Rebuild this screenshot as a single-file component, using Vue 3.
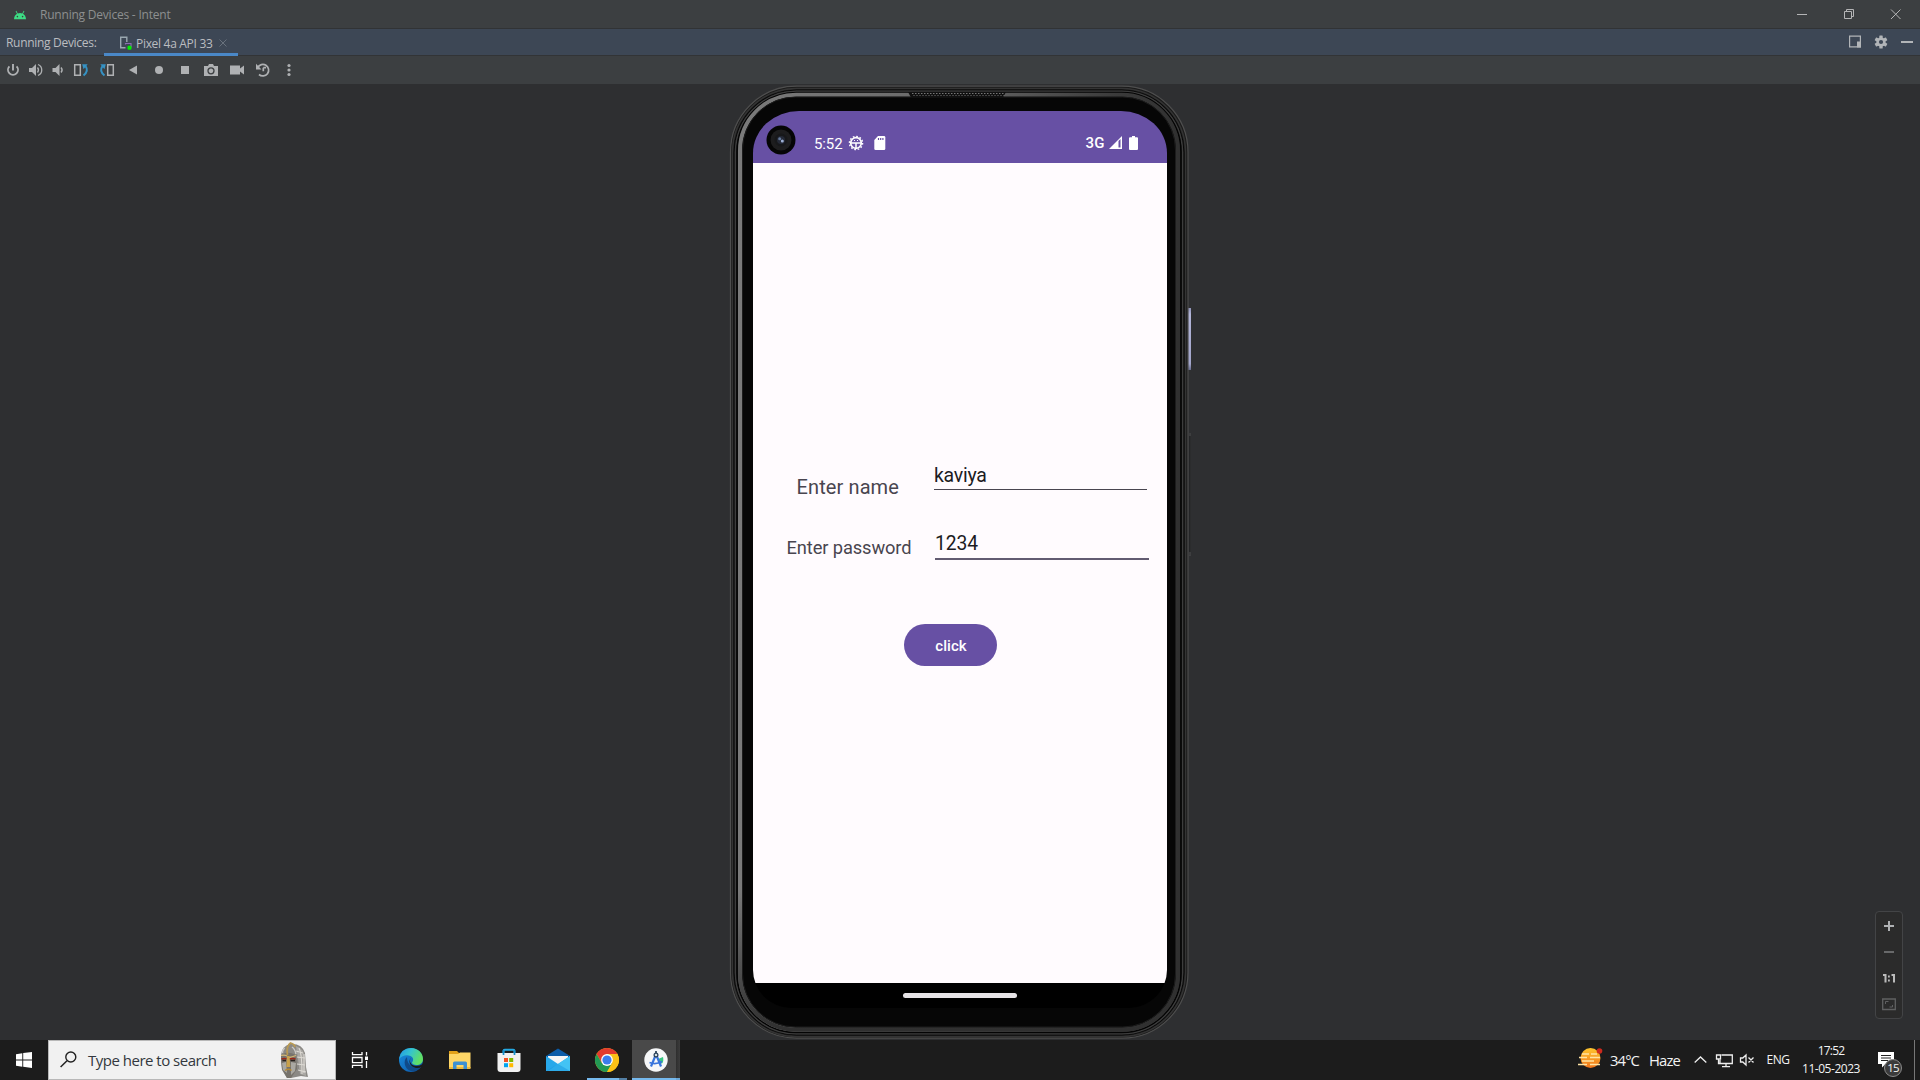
<script setup>
// Sets letter-spacing so that a label occupies a known width.
const vFit = {
  mounted(el, { value }) {
    const n = el.textContent.length
    const natural = el.getBoundingClientRect().width
    el.style.letterSpacing = `${(value - natural) / n}px`
  }
}
const speakerDots = Array.from({ length: 31 }, (_, i) => 182 + i * 3)
</script>

<template>
  <div class="desktop">
    <header class="titlebar">
      <svg class="droid" width="14" height="10" viewBox="0 0 14 10">
        <path d="M1 9.2C1.2 6.6 2.3 4.8 4 3.8L2.6 1.2l.7-.4 1.5 2.6a6.5 6.5 0 0 1 4.4 0L10.700 .8l.7.4L10 3.800c1.700 1 2.800 2.800 3 5.400z" fill="#3ddc84" />
        <circle cx="4.400" cy="6.600" r=".8" fill="#3c3f41" /><circle cx="9.600" cy="6.600" r=".8" fill="#3c3f41" />
      </svg>
      <span v-fit="130.5" class="title">Running Devices - Intent</span>
      <svg class="winbtns" width="123" height="28" viewBox="0 0 123 28" fill="none" stroke="#b4b5b6">
        <path d="M0 14.5h10M47.500 11.500h7v7h-7zM49.500 11.500v-2h7v7h-2M94 9.500l9.500 9.500m0-9.500L94 19" />
      </svg>
    </header>

    <div class="tabs">
      <span v-fit="90.5" class="tabs-label">Running Devices:</span>
      <div class="tab">
        <svg width="13" height="16" viewBox="0 0 13 16">
          <path d="M6.500 12.700H1.700V2.300h6.100V7" fill="none" stroke="#9aa7b0" stroke-width="1.400" />
          <path d="M6.500 9.500v-1H12v4" fill="none" stroke="#8b6cb0" stroke-width="1.200" />
          <rect x="8.500" y="10.800" width="4" height="4" rx="1.200" fill="#00f000" />
        </svg>
        <span v-fit="76.500" class="tab-name">Pixel 4a API 33</span>
        <svg class="close" width="8" height="8" viewBox="0 0 8 8"><path d="M.5.5l7 7m0-7l-7 7" stroke="#68717c" fill="none" /></svg>
      </div>
      <svg class="tabtools" width="66" height="14" viewBox="0 0 66 14">
        <path d="M.6 1.100h10.800v10.800H.6z" fill="none" stroke="#b2b5b8" stroke-width="1.200" /><path d="M8 6.500h4v6H8z" fill="#b2b5b8" />
        <g transform="translate(32 7)" fill="#b2b5b8">
          <circle r="4.600" />
          <rect v-for="a in [0, 60, 120]" :key="a" x="-1.700" y="-6.500" width="3.400" height="13" rx=".6" :transform="`rotate(${a})`" />
          <circle r="2.100" fill="#3d4755" />
        </g>
        <path d="M52 6h12v2H52z" fill="#b2b5b8" />
      </svg>
    </div>

    <nav class="tools">
      <svg style="width: 22px" viewBox="-11 -13 22 26"><path d="M0-6v6.500M-3.600-3.700a5 5 0 1 0 7.200 0" fill="none" stroke="#afb1b3" stroke-width="1.900" /></svg>
      <svg style="width: 23px" viewBox="-11.500 -13 23 26"><path d="M-6.500-2h3l4-4V6l-4-4h-3z" fill="#afb1b3" /><path d="M2-2.500q2 2.500 0 5M2.500-5.500c5 2 5 9 0 11" fill="none" stroke="#afb1b3" stroke-width="1.300" /></svg>
      <svg style="width: 21px" viewBox="-10.500 -13 21 26"><path d="M-5-2h3l4-4V6l-4-4h-3z" fill="#afb1b3" /><path d="M3.500-2.500q2.200 2.500 0 5" fill="none" stroke="#afb1b3" stroke-width="1.400" /></svg>
      <svg viewBox="-13 -13 26 26"><path d="M-6.300-5.200h5.600V5.200h-5.600z" fill="none" stroke="#afb1b3" stroke-width="1.500" /><path d="M2.500 5.500Q8 1 4.500-4" fill="none" stroke="#3592c4" stroke-width="2" /><path d="M1.200-5.700h5.500L2.500-.8z" fill="#3592c4" /></svg>
      <svg viewBox="-13 -13 26 26"><path d="M.7-5.200h5.600V5.200H.7z" fill="none" stroke="#afb1b3" stroke-width="1.500" /><path d="M-2.500 5.500Q-8 1-4.500-4" fill="none" stroke="#3592c4" stroke-width="2" /><path d="M-1.200-5.700h-5.500l4.200 4.900z" fill="#3592c4" /></svg>
      <svg viewBox="-13 -13 26 26"><path d="M-4 0l8-4.500v9z" fill="#afb1b3" /></svg>
      <svg viewBox="-13 -13 26 26"><circle r="4" fill="#afb1b3" /></svg>
      <svg viewBox="-13 -13 26 26"><path d="M-4-4h8v8h-8z" fill="#afb1b3" /></svg>
      <svg viewBox="-13 -13 26 26"><path d="M-7-4h4l1-2h4l1 2h4V6H-7z" fill="#afb1b3" /><circle cy=".8" r="3" fill="none" stroke="#3c3f41" stroke-width="1.300" /></svg>
      <svg viewBox="-13 -13 26 26"><path d="M-7-4.500h10v3l4-3v9l-4-3v3H-7z" fill="#afb1b3" /></svg>
      <svg viewBox="-13 -13 26 26"><path d="M-5.300-2.500A5.800 5.800 0 1 1-4 4.500M.3-2.300H3M.3-2.300v3.600" fill="none" stroke="#afb1b3" stroke-width="1.700" /><path d="M-7-6.200v5.700h5.500z" fill="#afb1b3" /></svg>
      <svg viewBox="-13 -13 26 26" fill="#afb1b3"><circle cy="-4.500" r="1.600" /><circle r="1.600" /><circle cy="4.500" r="1.600" /></svg>
    </nav>

    <main class="canvas">
      <div class="phone">
        <svg class="frame" width="464" height="954" viewBox="0 0 464 954" fill="none">
          <defs>
            <linearGradient id="rim" x1="0" y1="0" x2="1" y2="0">
              <stop offset="0" stop-color="#7a7a7a" /><stop offset=".5" stop-color="#686868" /><stop offset=".85" stop-color="#3c3c3c" /><stop offset="1" stop-color="#303030" />
            </linearGradient>
            <linearGradient id="shade" x1="0" y1="0" x2="0" y2="1">
              <stop offset=".85" stop-color="#303030" stop-opacity="0" /><stop offset="1" stop-color="#303030" />
            </linearGradient>
            <linearGradient id="power" x1="0" y1="0" x2="0" y2="1">
              <stop offset="0" stop-color="#8f93b8" /><stop offset=".1" stop-color="#b2b5d8" /><stop offset=".9" stop-color="#a2a5cb" /><stop offset="1" stop-color="#666a8c" />
            </linearGradient>
          </defs>
          <rect x="458" y="222" width="3" height="62" fill="url(#power)" />
          <path d="M459.500 347v122" stroke="#242527" stroke-width="1.500" /><path d="M460 347v3m0 116v4" stroke="#505153" />
          <rect x=".5" y=".2" width="457.500" height="952" rx="66" fill="#1b1b1b" stroke="#4e4e4e" stroke-width="1.200" />
          <rect x="2.500" y="2.500" width="453" height="948" rx="64" stroke="#343434" stroke-width="1.500" />
          <rect x="4" y="4" width="450" height="945" rx="62.500" stroke="#080808" />
          <rect x="5.500" y="5.300" width="447" height="942.500" rx="61" stroke="#3d3d3d" stroke-width="1.500" />
          <rect x="7" y="6.500" width="444" height="940" rx="59.500" stroke="#040404" stroke-width="1.500" />
          <rect x="10" y="8.700" width="438" height="935" rx="56" stroke="url(#rim)" stroke-width="4" />
          <rect x="10" y="8.700" width="438" height="935" rx="56" stroke="url(#shade)" stroke-width="4" />
          <rect x="12.500" y="11" width="433" height="930" rx="53" fill="#060606" stroke="#1c1c1c" />
          <path d="M178 6h98l-3 5.500h-92z" fill="#111" />
          <g stroke="#777" stroke-width="1"><path v-for="x in speakerDots" :key="x" :d="`M${x} 7.500h1.500m0 2h1`" /></g>
        </svg>

        <section class="screen">
          <div class="status">
            <span v-fit="28.5" class="time">5:52</span>
            <svg class="bug" width="16" height="16" viewBox="-8 -8 16 16">
              <circle r="5.300" fill="none" stroke="#fff" stroke-width="1.700" />
              <circle r="6.600" fill="none" stroke="#fff" stroke-width="1.400" stroke-dasharray="1.700 1.756" />
              <path d="M-5-.1H5M0 0v5" stroke="#fff" stroke-width="1.500" /><path d="M-2-2.500h1m2 0h1" stroke="#fff" />
            </svg>
            <svg class="sd" width="12" height="14" viewBox="0 0 12 14"><path d="M4 0h6q1.300 0 1.300 1.300v11.400q0 1.300-1.300 1.300H1.600Q.3 14 .3 12.700V4z" fill="#fff" /><path d="M4.500 2v2M6.700 2v2M8.900 2v2" stroke="#6750a4" stroke-width="1.200" /></svg>
            <span v-fit="19" class="net">3G</span>
            <svg class="signal" width="13" height="13" viewBox="0 0 13 13"><path d="M13 0v13H0z" fill="#fff" /><path d="M9.500 5l2-2v8.500h-2z" fill="#6750a4" /></svg>
            <svg class="battery" width="9" height="14" viewBox="0 0 9 14"><path d="M3 0h3v1.300h2q1 0 1 1V13q0 1-1 1H1q-1 0-1-1V2.300q0-1 1-1h2z" fill="#fff" /></svg>
            <svg class="camera" width="30" height="30" viewBox="-15 -15 30 30">
              <circle r="14.500" fill="#050505" /><circle r="10.500" fill="#1d1d1e" /><circle r="6.500" fill="#17181a" /><circle r="4" fill="#242936" />
              <circle cx="-1.300" cy="-1.300" r="1.500" fill="#65799b" /><circle cx="1.300" cy="1" r="1.500" fill="#9eb1d5" />
            </svg>
          </div>
          <div class="form">
            <div class="row name-row">
              <label><span v-fit="102.5">Enter name</span></label>
              <div class="field"><span v-fit="52.5">kaviya</span></div>
            </div>
            <div class="row pass-row">
              <label><span v-fit="125">Enter password</span></label>
              <div class="field"><span v-fit="43">1234</span></div>
            </div>
            <button><span v-fit="31.5">click</span></button>
          </div>
          <div class="navbar"><i></i></div>
        </section>
      </div>

      <aside class="zoom">
        <svg width="27" height="107" viewBox="0 0 27 107">
          <path d="M8 14h10m-5-5v10" stroke="#afb1b3" stroke-width="2" /><path d="M8 40h10" stroke="#68696a" stroke-width="2" />
          <path d="M7 63h2.500v7.500M15.500 63H18v7.500" fill="none" stroke="#bbb" stroke-width="2" /><path d="M12 63.500h1.800v2H12zm0 4h1.800v2H12z" fill="#bbb" />
          <path d="M6.700 87h12.600v10.500H6.700z" fill="none" stroke="#606162" stroke-width="1.300" /><path d="M9.500 92v-2.500h3m4 3.500v2h-3" fill="none" stroke="#606162" />
        </svg>
      </aside>
    </main>

    <footer class="taskbar">
      <div class="start"><svg width="16" height="16" viewBox="0 0 16 16" fill="#fff"><path d="M0 2.200l6.300-.9v6.300H0zM7.200 1.100L16 0v7.600H7.200zM0 8.400h6.300v6.300L0 13.800zM7.200 8.400H16V16l-8.800-1.200z" /></svg></div>
      <div class="search">
        <svg class="glass" width="17" height="17" viewBox="0 0 17 17"><circle cx="10.800" cy="6" r="5" fill="none" stroke="#222" stroke-width="1.400" /><path d="M7 9.700L.6 16" stroke="#222" stroke-width="1.500" /></svg>
        <span v-fit="128.5">Type here to search</span>
        <svg class="helmet" width="31" height="37" viewBox="0 0 31 37">
          <path d="M2 13Q3 4 11 2q12-1 15 9l1 14 2 10-7-1-10 2H8l-5-8-1-8z" fill="#8b8985" />
          <path d="M17 4q9 3 9 13l1 17-6-2-2-15z" fill="#aaa8a4" />
          <path d="M20 6q3 5 3 26M17 9l7 2M18 15l8 1M18 22l8 1M19 28l8 2M25 12v19" stroke="#dedbd5" fill="none" />
          <path d="M2 14q5-6 15-1l1 14-6 9H8l-5-9z" fill="#77736c" />
          <path d="M3 21l4-1 1 11-4-3zM12 20l5 1-1 8-4 4z" fill="#aaa8a2" />
          <path d="M2 13.500q5-1 6.500 1t8.500-1" fill="none" stroke="#d8bb78" stroke-width="1.200" />
          <path d="M2.500 17.200q3-1.500 5 0m3 0q3-1.500 6 0" fill="none" stroke="#9c2516" stroke-width="1.500" />
          <path d="M3.500 18.500h3.500m4.500 0h4.500" stroke="#27211d" stroke-width="1.300" />
          <path d="M8 14l2.500.1.800 11h-4z" fill="#c9a14a" /><path d="M6 28.500q3.500-2.500 6.500 0" fill="none" stroke="#b68a35" stroke-width="1.300" />
          <path d="M8.500 13Q7 4 11.500 1q4 1 4.500 4" fill="none" stroke="#b99a52" stroke-width="1.800" /><path d="M5.500 6q-2 2-2 5M13 5q3 2 4 7" fill="none" stroke="#cbc9c4" stroke-width="1.500" />
        </svg>
      </div>
      <div class="apps">
        <svg class="taskview" viewBox="0 0 48 40" fill="none" stroke="#fff" stroke-width="1.300"><path d="M16.500 12v2.700H26V12M16.500 28v-2.700H26V28M16.500 17.500H26v5.200h-9.500zM30.500 12v3.500M30.500 21v7" /><path d="M29 16.500h3v3.500h-3z" fill="#fff" stroke="none" /></svg>
        <svg viewBox="0 0 48 40">
          <defs>
            <linearGradient id="edgeTop" x1="0" y1="0" x2="1" y2=".4"><stop stop-color="#2196e8" /><stop offset=".5" stop-color="#35c4ce" /><stop offset="1" stop-color="#61e063" /></linearGradient>
            <linearGradient id="edgeLow" x1="0" y1="0" x2="1" y2="1"><stop stop-color="#1a93e4" /><stop offset="1" stop-color="#0b4f9e" /></linearGradient>
          </defs>
          <circle cx="24" cy="20" r="12" fill="url(#edgeLow)" />
          <path d="M12 19Q14 8 24 8c7 0 12 5 12 11 0 4-3 6-6.500 6-3 0-4.500-1-4.500-2.500 1.500-1.500 2-5-1.500-6.500-4-2-9 0-11.500 3z" fill="url(#edgeTop)" />
          <path d="M20 17c-4 3-3 12 4 14 5 1 9-2 10.500-5-3 2-7 2-9.500.5-3.500-2-5-5-5-9.500z" fill="#104a88" />
          <path d="M24.500 17.500q-2 1.200-1.500 4 1 4 6 4.500 4 0 7.500-2.500l-1 3q-4.500 2.500-8 1-5-2-5-6 0-3 2-4z" fill="#1c1c1c" />
        </svg>
        <svg viewBox="0 0 48 40"><path d="M13 11h8l2 2h11v4H13z" fill="#e3a21a" /><path d="M13 14h9l2-1.500h10.500V28H13z" fill="#ffd767" /><path d="M13 27h21.500v2H13z" fill="#eebb3d" /><path d="M17 29v-6q0-1.500 1.500-1.500h11q1.500 0 1.500 1.500v6h-3.500v-4h-7v4z" fill="#3d91d3" /></svg>
        <svg viewBox="0 0 48 40"><path d="M18.500 15v-4q0-1.300 1.300-1.300h8.400q1.300 0 1.300 1.300v4" fill="none" stroke="#24a9e2" stroke-width="1.900" /><path d="M12.500 13h23v16q0 3-3 3h-17q-3 0-3-3z" fill="#f1f1f1" /><path d="M18.500 10v5m11-5v5" stroke="#1590cc" stroke-width="1.700" /><path d="M19 18h4v4h-4z" fill="#f25022" /><path d="M24.200 18h4v4h-4z" fill="#7fba00" /><path d="M19 23.200h4v4h-4z" fill="#00a4ef" /><path d="M24.200 23.200h4v4h-4z" fill="#ffb900" /></svg>
        <svg viewBox="0 0 48 40"><path d="M12 16l12-7.500L36 16v3H12z" fill="#0c5ca8" /><path d="M14 16h20v8H14z" fill="#f5f5f5" /><path d="M12 16l12 8 12-8v15H12z" fill="#28a8ea" /><path d="M36 16v15H14l10-7z" fill="#43c3f4" /><path d="M24 24l12 7H12z" fill="#1a96df" opacity=".5" /></svg>
        <div class="app running">
          <svg viewBox="0 0 48 40"><circle cx="24" cy="20" r="12" fill="#fbc116" /><path d="M13.600 14A12 12 0 0 1 34.400 14H24L18.800 23z" fill="#e33b2e" /><path d="M13.600 14A12 12 0 0 0 24 32l5.200-9H18.800z" fill="#229954" /><path d="M34.400 14H24l5.200 9L24 32A12 12 0 0 0 34.400 14z" fill="#fbc116" /><circle cx="24" cy="20" r="5.900" fill="#fff" /><circle cx="24" cy="20" r="4.600" fill="#3b7ded" /></svg>
          <i></i><b></b>
        </div>
        <div class="app active">
          <svg viewBox="0 0 48 40"><circle cx="24" cy="20" r="11.700" fill="#f6f7f8" /><path d="M26 19l5-2q1 4-1 6.500h-3z" fill="#36c681" /><path d="M23.500 15.500l-4.500 11M24.500 15.500l4.500 11" fill="none" stroke="#3874dc" stroke-width="2.200" /><path d="M17.500 22.500q6 2.500 12.500-1" fill="none" stroke="#3874dc" stroke-width="1.800" /><circle cx="24" cy="15" r="1.900" fill="#d4dce3" stroke="#263e55" stroke-width="1.200" /><path d="M24 11v2" stroke="#263e55" stroke-width="1.700" /></svg>
          <i></i><b></b>
        </div>
      </div>
      <div class="tray">
        <svg class="weather" width="26" height="24" viewBox="0 0 26 24">
          <defs><linearGradient id="sun" x1="0" y1="0" x2="0" y2="1"><stop stop-color="#ffc62e" /><stop offset="1" stop-color="#ef731a" /></linearGradient></defs>
          <circle cx="12.500" cy="11" r="10" fill="url(#sun)" /><path d="M4 7h7M13 7h6M1 10.500h8M12 10.500h10M4 14h12M0 17.500h9M12 17.500h10" stroke="#ffe3a2" stroke-width="1.500" /><circle cx="21.500" cy="4" r="2.800" fill="#cd2a1d" />
        </svg>
        <span v-fit="29" class="temp">34°C</span>
        <span v-fit="31" class="haze">Haze</span>
        <svg class="sysicons" width="64" height="16" viewBox="0 0 64 16" fill="none" stroke="#eee" stroke-width="1.300"><path d="M.7 10.500L6.500 5l5.800 5.500M27.500 3h10.800v8.500H26V8M32 11.500v3m-4 .1h8M22.500 3h4v4h-4zM24.500 7v4.500h2M46.500 6h2.300L52 3v10l-3.200-3h-2.300zM54.500 5.500l5 5m0-5l-5 5" /></svg>
        <span v-fit="23" class="lang">ENG</span>
        <div class="clock"><span v-fit="26.500">17:52</span><span v-fit="58">11-05-2023</span></div>
        <div class="notes">
          <svg width="17" height="16" viewBox="0 0 17 16"><path d="M0 0h16v12H7.500L4 15.500V12H0z" fill="#fff" /><path d="M3 3.500h10M3 6h10M3 8.500h7" stroke="#222" /></svg>
          <em><span v-fit="11.500">15</span></em>
        </div>
      </div>
    </footer>
  </div>
</template>

<style>
body { margin: 0; overflow: hidden; background: #2e2f31; }
</style>

<style scoped>
* { box-sizing: border-box; }
svg { display: block; flex: none; }
span { white-space: nowrap; flex: none; }
.desktop { width: 1920px; height: 1080px; display: flex; flex-direction: column; font-family: "Open Sans", "Noto Sans", sans-serif; font-size: 12px; }
.titlebar { height: 29px; display: flex; align-items: center; background: #3c3f41; border-bottom: 1px solid #313335; padding-left: 13px; }
.droid { margin-top: 1px; }
.title { margin-left: 13px; margin-top: 2px; color: #8d8f90; line-height: 26px; }
.winbtns { margin-left: auto; }
.tabs { height: 27px; display: flex; align-items: center; background: #3d4755; border-bottom: 1px solid #323436; color: #bbbdc0; }
.tabs-label { margin-left: 6px; margin-top: 2px; line-height: 24px; }
.tab { width: 134px; height: 27px; margin: 0 0 -1px 7.5px; padding: 3px 0 0 15px; display: flex; align-items: center; border-bottom: 3px solid #4a88c7; }
.tab-name { margin-left: 4px; margin-top: 2px; line-height: 20px; }
.close { margin-left: 6.5px; }
.tabtools { margin-left: auto; margin-right: 5px; width: 66px; }
.tools { height: 28px; display: flex; align-items: center; background: #3c3f41; padding-left: 2px; }
.tools svg { width: 26px; height: 26px; }
.canvas { height: 956px; background: #2e2f31; position: relative; display: flex; justify-content: center; padding-top: 2px; }
.phone { position: relative; width: 460px; height: 954px; padding: 25px 0 0 23px; }
.frame { position: absolute; left: 0; top: 0; overflow: visible; }
.screen { position: relative; width: 414px; height: 897px; border-radius: 46px 46px 38px 38px / 42px 42px 38px 38px; overflow: hidden; background: #000; font-family: Roboto, sans-serif; display: flex; flex-direction: column; }
.status { height: 52px; background: #6750a4; color: #fff; display: flex; align-items: center; padding: 11px 29px 0 61px; font-size: 15px; position: relative; }
.time { line-height: 20px; margin-top: 2px; }
.bug { margin-left: 5.5px; }
.sd { margin-left: 9.5px; }
.net { margin-left: auto; font-weight: 500; }
.signal { margin-left: 4.5px; }
.battery { margin-left: 7px; }
.camera { position: absolute; left: 12.500px; top: 13.500px; }
.form { height: 820px; background: #fffbfe; padding-top: 300px; color: #49454f; }
.row { display: flex; align-items: flex-start; }
.row label, .field { display: flex; line-height: 24px; }
.field { color: #1c1b1f; padding-top: 1px; }
.name-row { height: 27px; padding-left: 43.5px; font-size: 20px; }
.name-row label { width: 137.5px; padding-top: 12px; }
.name-row .field { width: 213px; height: 27px; border-bottom: 1px solid #49454f; font-size: 19.500px; }
.pass-row { height: 29px; margin-top: 41px; padding-left: 33.500px; font-size: 18.300px; }
.pass-row label { width: 148.500px; padding-top: 5px; }
.pass-row .field { width: 214px; height: 29px; border-bottom: 2px solid #625b71; font-size: 19.300px; }
button { display: flex; align-items: center; justify-content: center; margin: 64px 0 0 151px; width: 93px; height: 42px; border: 0; border-radius: 21px; padding: 2px 0 0 1px; background: #6750a4; color: #fff; font: 500 15px Roboto, sans-serif; }
.navbar { height: 25px; display: flex; justify-content: center; padding-top: 10px; }
.navbar i { width: 114px; height: 5px; border-radius: 2.500px; background: #e6e3e6; }
.zoom { position: absolute; left: 1875px; top: 827px; width: 28px; height: 108px; border: 1px solid #434446; border-radius: 4px; background: #2b2b2b; }
.taskbar { height: 40px; background: #1c1c1c; color: #f3f3f3; display: flex; }
.start { width: 48px; display: flex; align-items: center; justify-content: center; }
.search { width: 288px; height: 40px; background: #f1f1f1; border: 1px solid #b8b8b8; display: flex; align-items: center; padding-left: 11px; font-size: 15px; color: #33383e; }
.glass { margin-right: 11px; margin-top: -2px; }
.helmet { margin-left: 62px; }
.apps { display: flex; gap: 1px; }
.apps svg { width: 48px; height: 40px; }
.apps .taskview { margin-right: 2px; }
.app { position: relative; width: 48px; height: 40px; }
.app i, .app b { position: absolute; bottom: 0; height: 2px; background: #76b9ed; }
.running i { left: 4px; width: 32px; }
.running b { left: 36px; width: 8px; background: #537fa4; }
.active { background: linear-gradient(90deg, #494949 44px, #2e2e2e 44px, #3c3c3c); }
.active i { left: 0; width: 44px; }
.active b { left: 44px; width: 4px; background: #6aa6d5; }
.tray { margin-left: auto; display: flex; align-items: center; width: 342px; }
.weather { margin-top: -3px; }
.temp { margin-left: 6px; font-size: 14.800px; }
.haze { margin-left: 10px; font-size: 14.800px; }
.sysicons { margin-left: 14px; margin-top: -1px; }
.lang { margin-left: 8.5px; margin-top: -1px; }
.clock { margin-left: 12.500px; width: 58px; display: flex; flex-direction: column; align-items: center; line-height: 18px; }
.notes { position: relative; margin-left: 17.500px; width: 37.500px; height: 40px; padding-top: 12px; border-right: 1px solid #777; }
.notes em { position: absolute; left: 6.500px; top: 18.500px; width: 18px; height: 18px; border: 1px solid #8a8a8a; border-radius: 50%; background: #3b3b3b; display: flex; align-items: center; justify-content: center; font-style: normal; font-size: 11.5px; }
</style>
